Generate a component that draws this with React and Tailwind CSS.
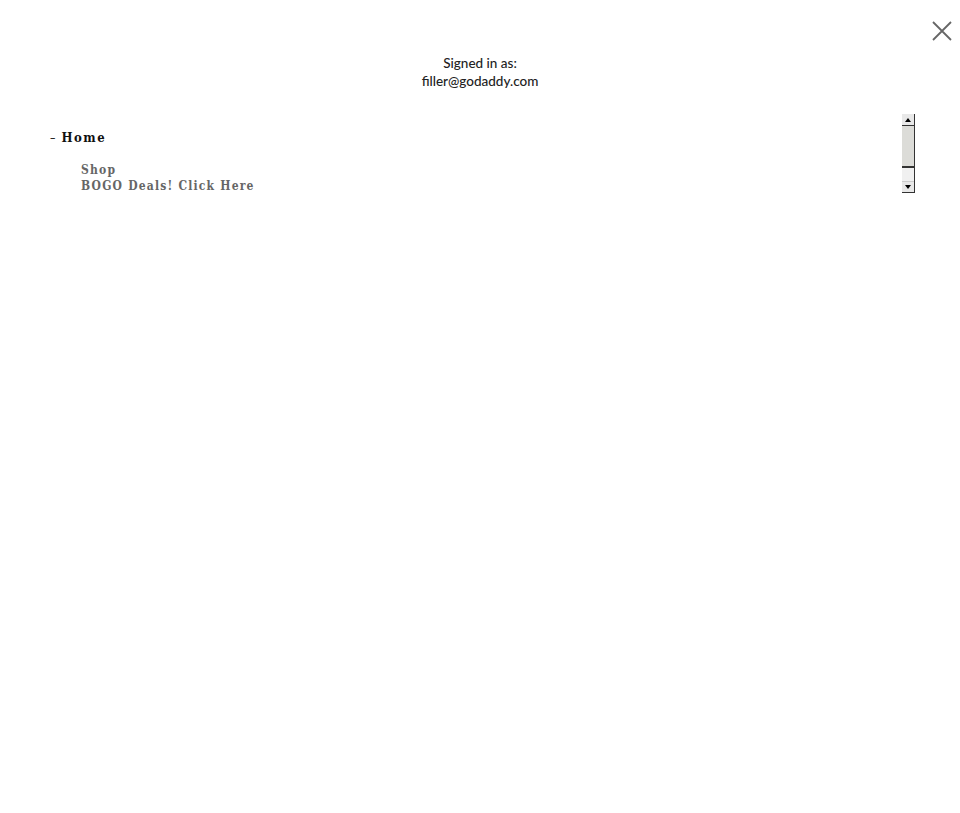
import React from 'react';

// Scrollbar drawn like a classic widget
function OldScrollbar() {
  return (
    <div className="flex flex-col w-[13px] h-[79px] bg-[#f0f0f0] border-r border-[#333]">
      <div className="flex items-center justify-center h-[12px] bg-[#e8e8e8] border-b border-[#333]">
        <div className="w-0 h-0 border-l-[3px] border-r-[3px] border-b-[4px] border-l-transparent border-r-transparent border-b-black" />
      </div>
      <div className="h-[42px] bg-[#dcdcd8] border-b-2 border-[#333]" />
      <div className="flex-1" />
      <div className="flex items-center justify-center h-[12px] bg-[#e8e8e8] border-t border-[#ccc] border-b border-b-[#333]">
        <div className="w-0 h-0 border-l-[3px] border-r-[3px] border-t-[4px] border-l-transparent border-r-transparent border-t-black" />
      </div>
    </div>
  );
}

export default function App() {
  const serif = { fontFamily: '"DejaVu Serif Condensed", "DejaVu Serif", serif' };

  return (
    <div className="relative w-[960px] h-[813px] bg-white">
      <button className="absolute top-[20px] right-[7px] w-[22px] h-[22px] flex items-center justify-center">
        <svg width="20" height="20" viewBox="0 0 20 20" fill="none" stroke="#666" strokeWidth="1.8">
          <path d="M1 1 L19 19 M19 1 L1 19" />
        </svg>
      </button>

      <div className="pt-[54px] text-center text-[13.5px] leading-[18px] font-medium text-[#222]" style={{ fontFamily: 'Lato, "Open Sans", sans-serif' }}>
        <div>Signed in as:</div>
        <div>filler@godaddy.com</div>
      </div>

      <div className="flex justify-between pl-[50px] pr-[45px] mt-[24px]">
        <div className="pt-[14px]" style={serif}>
          <div className="flex items-center gap-[6px]">
            <span className="text-[12px] text-[#111]">–</span>
            <span className="text-[13px] font-bold tracking-[1.5px] text-[#111]">Home</span>
          </div>
          <ul className="pl-[31px] mt-[14px] text-[12px] leading-[16px] font-bold tracking-[1.2px] text-[#666]">
            <li>Shop</li>
            <li>BOGO Deals! Click Here</li>
          </ul>
        </div>
        <OldScrollbar />
      </div>
    </div>
  );
}
